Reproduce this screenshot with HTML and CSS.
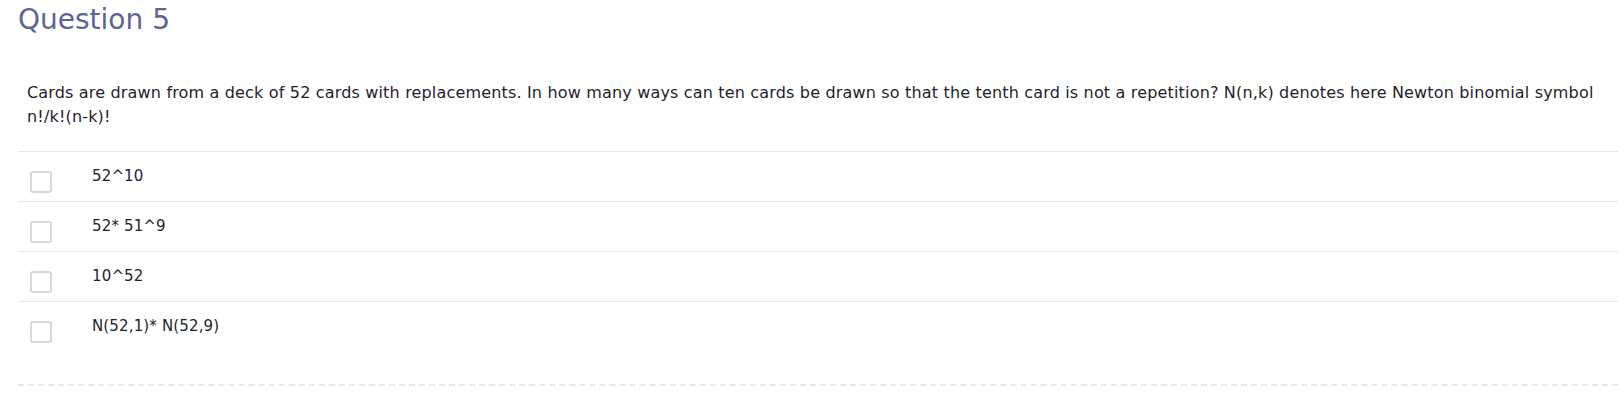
FILE: index.html
```html
<!DOCTYPE html>
<html lang="en">
<head>
<meta charset="utf-8">
<title>Question 5</title>
<link rel="stylesheet" href="styles.css">
</head>
<body>
<div class="question">
  <h2 class="question-title">Question 5</h2>
  <p class="question-text">Cards are drawn from a deck of 52 cards with replacements. In how many ways can ten cards be drawn so that the tenth card is not a repetition? N(n,k) denotes here Newton binomial symbol <span class="nowrap">n!/k!(n-k)!</span></p>
  <ul class="options">
    <li class="option"><span class="checkbox"></span><span class="option-label">52^10</span></li>
    <li class="option"><span class="checkbox"></span><span class="option-label">52* 51^9</span></li>
    <li class="option"><span class="checkbox"></span><span class="option-label">10^52</span></li>
    <li class="option"><span class="checkbox"></span><span class="option-label">N(52,1)* N(52,9)</span></li>
  </ul>
  <div class="footer-rule"></div>
</div>
</body>
</html>
```
FILE: styles.css
```css
html, body {
  margin: 0;
  padding: 0;
  background: #ffffff;
}

body {
  font-family: "DejaVu Sans", "Liberation Sans", sans-serif;
  color: #1e1e2d;
}

.question {
  margin: 0 6px 0 18px;
}

.question-title {
  margin: 0;
  padding-top: 2px;
  font-size: 28px;
  line-height: 36px;
  font-weight: 400;
  color: #5b6596;
}

.question-text {
  margin: 43px 0 0;
  padding: 0 10px 0 9px;
  font-size: 16px;
  letter-spacing: 0.17px;
  line-height: 24px;
  color: #1e1e2d;
}

.nowrap {
  white-space: nowrap;
}

.options {
  list-style: none;
  margin: 22px 0 0;
  padding: 0;
}

.option {
  display: flex;
  align-items: center;
  height: 49px;
  border-top: 1px solid #e6e7ea;
}

.checkbox {
  box-sizing: border-box;
  flex: none;
  width: 22px;
  height: 22px;
  margin: 10px 0 0 12px;
  border: 2px solid #d3d8e3;
  border-radius: 3px;
  background: #fff;
}

.option-label {
  margin-left: 40px;
  font-size: 15px;
  letter-spacing: 0.15px;
  line-height: 20px;
  margin-top: -2px;
}

.footer-rule {
  margin-top: 33px;
  border-top: 2px dashed #e8e9f0;
}
```
